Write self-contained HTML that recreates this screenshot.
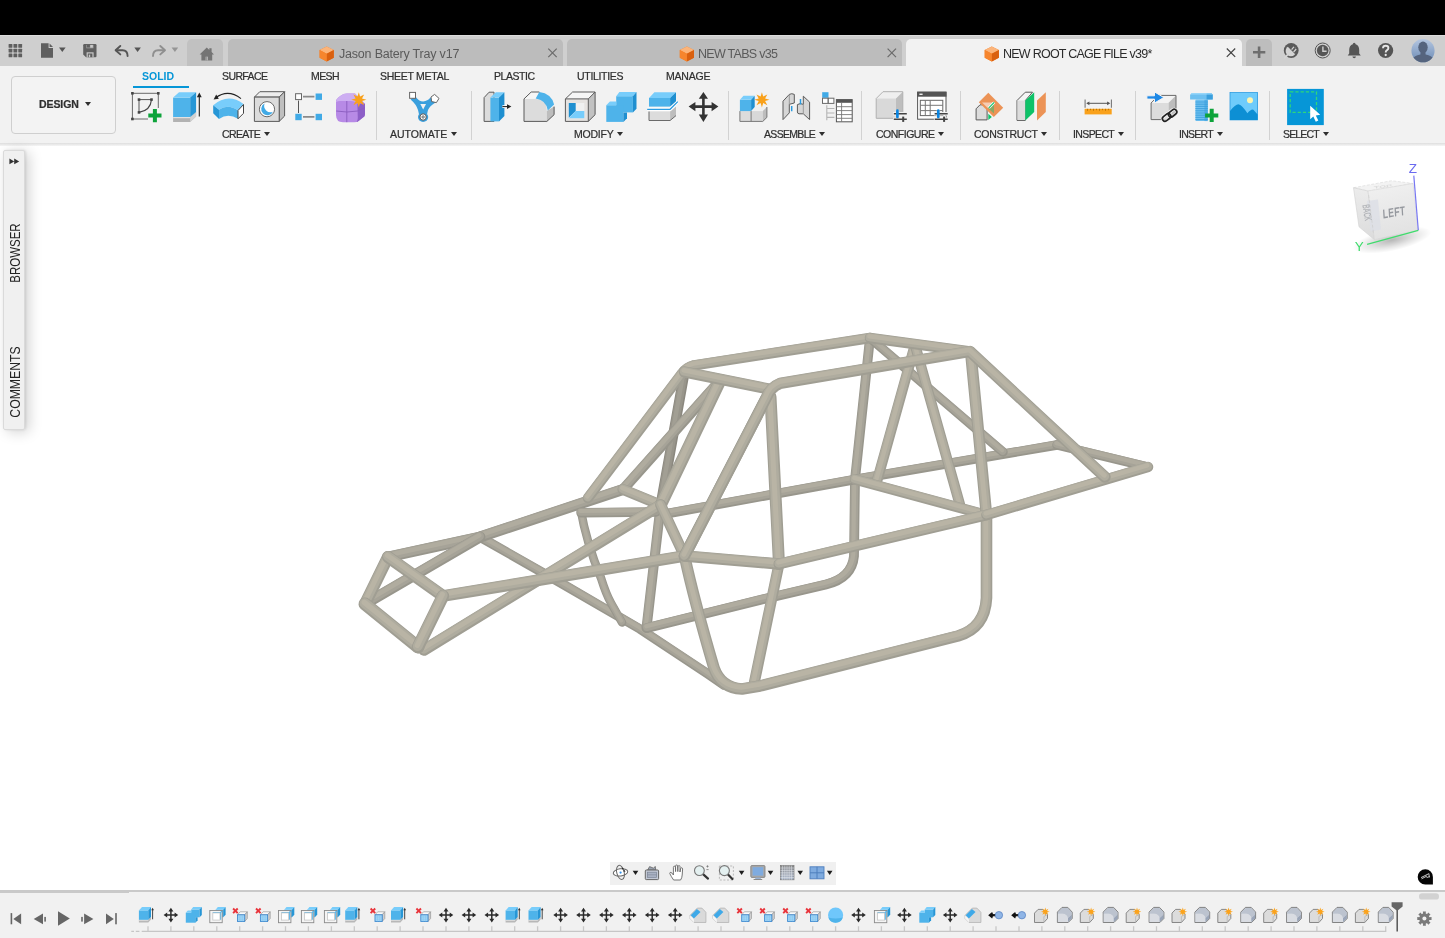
<!DOCTYPE html>
<html lang="en">
<head>
<meta charset="utf-8">
<title>Fusion 360 - NEW ROOT CAGE FILE v39*</title>
<style>
*{box-sizing:border-box;margin:0;padding:0}
html,body{width:1445px;height:938px;overflow:hidden;background:#fff}
body{font-family:"Liberation Sans",sans-serif;color:#3c3c3c;position:relative}
.abs{position:absolute}
#blackbar{left:0;top:0;width:1445px;height:35px;background:#000}
#titlebar{left:0;top:35px;width:1445px;height:31px;background:#cfcfcf;border-top:1px solid #dcdcdc}
.tab{position:absolute;top:3px;height:28px;background:#bcbcbc;border-radius:5px 5px 0 0;font-size:12.5px;color:#5a5a5a;line-height:27px;white-space:nowrap}
.tab.active{background:#f2f2f2;color:#2b2b2b}
.tab .lbl{position:absolute;top:2px}
.tab .x{position:absolute;top:0;font-size:15px;color:#666}
#toolbar{left:0;top:66px;width:1445px;height:78px;background:#f2f2f2}
#tbline{left:0;top:143px;width:1445px;height:3px;background:linear-gradient(#dedede,#ececec 60%,#f6f6f6)}
.ttab{position:absolute;top:4px;font-size:10.5px;color:#2f2f2f;line-height:13px;white-space:nowrap;}
.ttab.sel{color:#0696d7;font-weight:bold}
.glbl{position:absolute;top:61.5px;font-size:10.5px;color:#2f2f2f;line-height:13px;white-space:nowrap}
.glbl i{display:inline-block;width:0;height:0;border-left:3px solid transparent;border-right:3px solid transparent;border-top:4px solid #2f2f2f;margin-left:3.8px;vertical-align:2px}
.sep{position:absolute;top:25px;width:1px;height:49px;background:#d2d2d2}
.ttab,.glbl,.tab .lbl{will-change:transform}
.ttab:not(.sel),.glbl{-webkit-text-stroke:0.22px #2f2f2f}
.ico{position:absolute;overflow:visible}
#timeline{left:0;top:889.8px;width:1445px;height:48.2px;background:#f1f1f1;border-top:2.2px solid #c9c9c9}
</style>
</head>
<body>
<div id="blackbar" class="abs"></div>
<div id="titlebar" class="abs">
  <div class="tab" style="left:187px;width:36px;background:#c1c1c1"></div>
  <div class="tab" style="left:228px;width:335px"><span class="lbl" style="left:111px;letter-spacing:-0.2px">Jason Batery Tray v17</span></div>
  <div class="tab" style="left:567px;width:335px"><span class="lbl" style="left:131px;letter-spacing:-0.71px">NEW TABS v35</span></div>
  <div class="tab active" style="left:906px;width:336px"><span class="lbl" style="left:97px;letter-spacing:-0.75px">NEW ROOT CAGE FILE v39*</span></div>
  <div class="tab" style="left:1246px;width:26px;background:#bdbdbd"></div>
</div>
<svg class="abs" style="left:0;top:35px" width="1445" height="31" viewBox="0 35 1445 31">
  <defs>
    <g id="ocube">
      <path d="M0 3.6 L7.1 0 L14.2 3.6 L14.2 11.2 L7.1 15 L0 11.2Z" fill="#f47b20"/>
      <path d="M0 3.6 L7.1 0 L14.2 3.6 L7.1 7.3Z" fill="#fbb47a"/>
      <path d="M7.1 7.3 L14.2 3.6 L14.2 11.2 L7.1 15Z" fill="#d9600f"/>
      <path d="M0 3.6 L7.1 7.3 L7.1 15 L0 11.2Z" fill="#f6852d"/>
    </g>
    <g id="xclose"><path d="M0 0 L8.4 8.4 M8.4 0 L0 8.4" stroke-width="1.2" fill="none"/></g>
    <path id="dd" d="M0 0 L6.6 0 L3.3 4.4Z"/>
    <linearGradient id="avg" x1="0" y1="0" x2="0" y2="1"><stop offset="0" stop-color="#b4c6e0"/><stop offset="1" stop-color="#6c8bb5"/></linearGradient>
    <clipPath id="avc"><circle cx="1423" cy="50.7" r="11.6"/></clipPath>
  </defs>
  <!-- grid -->
  <g fill="#5f5f5f"><rect x="8.60" y="44.00" width="3.8" height="3.7" rx=".5"/><rect x="13.45" y="44.00" width="3.8" height="3.7" rx=".5"/><rect x="18.30" y="44.00" width="3.8" height="3.7" rx=".5"/><rect x="8.60" y="48.75" width="3.8" height="3.7" rx=".5"/><rect x="13.45" y="48.75" width="3.8" height="3.7" rx=".5"/><rect x="18.30" y="48.75" width="3.8" height="3.7" rx=".5"/><rect x="8.60" y="53.50" width="3.8" height="3.7" rx=".5"/><rect x="13.45" y="53.50" width="3.8" height="3.7" rx=".5"/><rect x="18.30" y="53.50" width="3.8" height="3.7" rx=".5"/></g>
  <!-- file -->
  <path d="M41 43.2 L48.6 43.2 L48.6 48 L53 48 L53 57.8 L41 57.8Z M49.6 43.4 L53 46.9 L49.6 46.9Z" fill="#5f5f5f"/>
  <use href="#dd" x="59" y="47.6" fill="#555"/>
  <!-- save -->
  <path d="M84.4 44 H95.4 Q96.5 44 96.5 45.2 V56 Q96.5 57.2 95.4 57.2 H86 L83.2 54.6 V45.2 Q83.2 44 84.4 44Z" fill="#5f5f5f"/>
  <rect x="86.3" y="44.9" width="7.2" height="3.4" fill="#9c9c9c"/><rect x="86.9" y="44.9" width="3" height="2.6" fill="#5f5f5f"/><rect x="90.4" y="44.9" width="2.4" height="2.6" fill="#c9c9c9"/>
  <rect x="86.6" y="52.3" width="7" height="4.9" fill="#c9c9c9"/><rect x="87.8" y="53.5" width="4.6" height="3.7" fill="#5f5f5f"/><rect x="88.8" y="54.6" width="1.4" height="2.6" fill="#c9c9c9"/>
  <!-- undo -->
  <path d="M120.3 46 L115.6 50.2 L120.3 54.4" fill="none" stroke="#555" stroke-width="1.9" stroke-linejoin="round" stroke-linecap="round"/>
  <path d="M116.4 50.2 L122.5 50.2 Q127.6 50.4 127.6 56" fill="none" stroke="#555" stroke-width="1.9" stroke-linecap="round"/>
  <use href="#dd" x="134.3" y="47.6" fill="#555"/>
  <!-- redo -->
  <path d="M160.3 46 L165 50.2 L160.3 54.4" fill="none" stroke="#8f8f8f" stroke-width="1.9" stroke-linejoin="round" stroke-linecap="round"/>
  <path d="M164.2 50.2 L158.1 50.2 Q153 50.4 153 56" fill="none" stroke="#8f8f8f" stroke-width="1.9" stroke-linecap="round"/>
  <use href="#dd" x="171.6" y="47.6" fill="#959595"/>
  <!-- home -->
  <g transform="translate(0 1.3)"><path d="M199.6 53.2 L206.8 46.2 L209.3 48.6 L209.3 47 L211.6 47 L211.6 50.8 L214 53.2 L212.2 53.2 L212.2 59.2 L201.4 59.2 L201.4 53.2Z" fill="#747474"/>
  <path d="M205.6 59.2 V55.4 H208 V59.2Z" fill="#c1c1c1"/><path d="M206.8 55.4 V59.2" stroke="#747474" stroke-width=".7"/></g>
  <!-- tab icons -->
  <use href="#ocube" x="319.6" y="46.5"/>
  <use href="#xclose" x="548.3" y="48.7" stroke="#6a6a6a"/>
  <use href="#ocube" x="679.8" y="46.5"/>
  <use href="#xclose" x="887.6" y="48.7" stroke="#6a6a6a"/>
  <use href="#ocube" x="984.7" y="46.5"/>
  <use href="#xclose" x="1226.8" y="48.5" stroke="#444"/>
  <!-- plus -->
  <path d="M1259.1 46.4 L1259.1 58 M1253 52.2 L1265.3 52.2" stroke="#6e6e6e" stroke-width="2.6" fill="none"/>
  <!-- extension / job status -->
  <circle cx="1291.2" cy="50.5" r="7.4" fill="#5a5a5a"/>
  <circle cx="1290.9" cy="50.9" r="5.3" fill="#d4d4d4"/>
  <path d="M1284.2 58.4 L1288.6 53.6" stroke="#d4d4d4" stroke-width="1.7"/>
  <path d="M1287.6 46.6 L1291 43.6 L1298.2 50.8 L1295.2 54.2Z" fill="#5a5a5a"/>
  <path d="M1291.6 49.6 L1293.9 46.8 M1293.6 52 L1296.2 49" stroke="#d4d4d4" stroke-width="1.2"/>
  <!-- clock -->
  <circle cx="1322.7" cy="50.5" r="7.5" fill="none" stroke="#555" stroke-width="1"/>
  <circle cx="1322.7" cy="50.5" r="5.8" fill="#555"/>
  <path d="M1322.9 46.6 L1322.9 51.2 L1326.6 51.2" stroke="#cfcfcf" stroke-width="1.4" fill="none"/>
  <!-- bell -->
  <path d="M1354.2 42.8 Q1355.5 42.8 1355.6 44.3 Q1359.2 45.6 1359.2 50 L1359.2 53.4 L1360.8 55.6 L1347.7 55.6 L1349.2 53.4 L1349.2 50 Q1349.2 45.6 1352.8 44.3 Q1352.9 42.8 1354.2 42.8Z" fill="#555"/>
  <path d="M1352.4 56.6 L1356 56.6 Q1355.6 58.2 1354.2 58.2 Q1352.8 58.2 1352.4 56.6Z" fill="#555"/>
  <!-- help -->
  <circle cx="1385.6" cy="50.5" r="7.6" fill="#555"/>
  <path d="M1383 48.2 Q1383 45.8 1385.7 45.8 Q1388.4 45.8 1388.4 48 Q1388.4 49.4 1386.8 50.3 Q1385.7 51 1385.7 52.4" fill="none" stroke="#e6e6e6" stroke-width="1.9"/>
  <circle cx="1385.7" cy="55" r="1.15" fill="#e6e6e6"/>
  <!-- avatar -->
  <circle cx="1423" cy="50.7" r="11.6" fill="url(#avg)"/>
  <g clip-path="url(#avc)" fill="#55647e">
    <ellipse cx="1423" cy="47.3" rx="4.7" ry="5.9"/>
    <path d="M1420.6 51 L1425.4 51 L1425.6 54.6 Q1432 56 1433.4 59 L1434 64 L1412 64 L1412.6 59 Q1414 56 1420.4 54.6Z"/>
  </g>
</svg>
<div id="toolbar" class="abs">
  <div class="ttab sel" style="left:142px">SOLID</div>
  <div class="ttab" style="left:222px;letter-spacing:-0.6px">SURFACE</div>
  <div class="ttab" style="left:311px;letter-spacing:-0.61px">MESH</div>
  <div class="ttab" style="left:380px;letter-spacing:-0.27px">SHEET METAL</div>
  <div class="ttab" style="left:494px;letter-spacing:-0.45px">PLASTIC</div>
  <div class="ttab" style="left:577px;letter-spacing:-0.31px">UTILITIES</div>
  <div class="ttab" style="left:666px;letter-spacing:-0.19px">MANAGE</div>
  <div class="abs" style="left:132.5px;top:19.6px;width:56.5px;height:2.7px;background:#0696d7"></div>
  <div class="abs" id="designbtn" style="left:11px;top:10px;width:105px;height:58px;border:1px solid #cfcfcf;border-radius:4px;background:#f3f3f3"></div>
  <div class="glbl" style="left:39.2px;top:31.5px;font-weight:bold;letter-spacing:-0.08px">DESIGN<i style="margin-left:6px"></i></div>
  <div class="glbl" style="left:222px;letter-spacing:-0.6px">CREATE<i></i></div>
  <div class="glbl" style="left:390px">AUTOMATE<i></i></div>
  <div class="glbl" style="left:574px;letter-spacing:-0.24px">MODIFY<i></i></div>
  <div class="glbl" style="left:764px;letter-spacing:-0.68px">ASSEMBLE<i></i></div>
  <div class="glbl" style="left:876px;letter-spacing:-0.5px">CONFIGURE<i></i></div>
  <div class="glbl" style="left:974px;letter-spacing:-0.25px">CONSTRUCT<i></i></div>
  <div class="glbl" style="left:1073px;letter-spacing:-0.62px">INSPECT<i></i></div>
  <div class="glbl" style="left:1179px;letter-spacing:-0.75px">INSERT<i></i></div>
  <div class="glbl" style="left:1283px;letter-spacing:-0.83px">SELECT<i></i></div>
  <div class="sep" style="left:376px"></div>
  <div class="sep" style="left:471px"></div>
  <div class="sep" style="left:728px"></div>
  <div class="sep" style="left:861px"></div>
  <div class="sep" style="left:960px"></div>
  <div class="sep" style="left:1059px"></div>
  <div class="sep" style="left:1135px"></div>
  <div class="sep" style="left:1269px"></div>
</div>
<div id="tbline" class="abs"></div>
<svg class="abs" style="left:0;top:66px" width="1445" height="78" viewBox="0 66 1445 78">
<defs>
  <path id="star8" d="M0 -7.6 L1.3 -3.2 L5.4 -5.4 L3.2 -1.3 L7.6 0 L3.2 1.3 L5.4 5.4 L1.3 3.2 L0 7.6 L-1.3 3.2 L-5.4 5.4 L-3.2 1.3 L-7.6 0 L-3.2 -1.3 L-5.4 -5.4 L-1.3 -3.2Z" fill="#f9a11b"/>
  <g id="gplus"><path d="M-2 -6.6 H2 V-2 H6.6 V2 H2 V6.6 H-2 V2 H-6.6 V-2 H-2Z" fill="#0da33a"/></g>
</defs>
<!-- ============ CREATE ============ -->
<!-- sketch -->
<g>
  <path d="M132.4 93.3 H158.3 V108 M132.4 93.3 V119 H148" fill="none" stroke="#6a6a6a" stroke-width="1"/>
  <path d="M139 99.6 H151.5 M139 99.6 V112.4" fill="none" stroke="#555" stroke-width="1"/>
  <path d="M151.5 99.6 Q150.5 110.5 139 112.4" fill="none" stroke="#444" stroke-width="1.1"/>
  <g fill="#444"><rect x="131.1" y="92" width="2.6" height="2.6"/><rect x="157" y="92" width="2.6" height="2.6"/><rect x="131.1" y="117.7" width="2.6" height="2.6"/>
  <rect x="137.7" y="98.3" width="2.6" height="2.6"/><rect x="150.2" y="98.3" width="2.6" height="2.6"/><rect x="137.7" y="111.1" width="2.6" height="2.6"/></g>
  <use href="#gplus" x="154.9" y="115.6"/>
</g>
<!-- extrude -->
<g>
  <path d="M173.1 117 H190.2 L196.1 112 V116.6 L190.2 121.9 H173.1Z" fill="#b2b2b2"/>
  <path d="M190.2 117 L196.1 112 V116.6 L190.2 121.9Z" fill="#d2d2d2"/>
  <rect x="173.1" y="117" width="17.1" height="1.2" fill="#e2e2e2"/>
  <rect x="173.1" y="97.6" width="17.1" height="19.4" fill="#4eb3ea"/>
  <path d="M173.1 97.6 L179 92.2 H196.1 L190.2 97.6Z" fill="#78cdfb"/>
  <path d="M190.2 97.6 L196.1 92.2 V112 L190.2 117Z" fill="#2696d6"/>
  <path d="M199.3 95 V116.6" stroke="#222" stroke-width="1.1"/>
  <path d="M199.3 92.6 L201.7 97.2 H196.9Z" fill="#222"/>
</g>
<!-- revolve -->
<g>
  <path d="M241 98.6 Q228 88.6 215.6 97.8" fill="none" stroke="#222" stroke-width="1.1"/>
  <path d="M213.6 99.4 L216.2 94.6 L218.8 98.8Z" fill="#222"/>
  <path d="M213.2 105.2 Q228 92.6 243.5 103.9 L238 110.5 Q228 103.6 219 109.7Z" fill="#78cdfb"/>
  <path d="M213.2 105.2 L219 109.7 V119 L213.2 113.3Z" fill="#2696d6"/>
  <path d="M219 109.7 Q228 103.6 238 110.5 V118.8 Q228 112.6 219 119Z" fill="#4eb3ea"/>
  <path d="M238 110.5 L243.5 104.5 V113.3 L238 118.8Z" fill="#fff" stroke="#444" stroke-width="1"/>
</g>
<!-- hole -->
<g stroke="#5a5a5a" stroke-width="1" stroke-linejoin="round">
  <path d="M254.4 97.1 L259.8 91.7 H284.6 L279.2 97.1Z" fill="#ededed"/>
  <path d="M279.2 97.1 L284.6 91.7 V116 L279.2 121.4Z" fill="#bfbfbf"/>
  <rect x="254.4" y="97.1" width="24.8" height="24.3" fill="#dcdcdc"/>
  <circle cx="267" cy="109.2" r="7.6" fill="#fff" stroke="#6a6a6a"/>
</g>
<path d="M264.6 103.6 A6.2 6.2 0 1 0 273 111.8 A6.4 6.4 0 0 1 264.6 103.6Z" fill="#41aae6"/>
<!-- pattern -->
<g>
  <path d="M303 96.7 H314.4 M303 116.9 H314.4" stroke="#8a8a8a" stroke-width="1.8"/>
  <path d="M298.5 100.6 V113" stroke="#555" stroke-width="1"/>
  <rect x="295.6" y="93.7" width="5.9" height="5.9" fill="#fff" stroke="#666" stroke-width="1"/>
  <rect x="315.6" y="93.5" width="6.4" height="6.4" fill="#41aae6"/>
  <rect x="295.3" y="113.8" width="6.4" height="6.4" fill="#41aae6"/>
  <rect x="315.6" y="113.8" width="6.4" height="6.4" fill="#41aae6"/>
</g>
<!-- form -->
<g>
  <path d="M341 95.4 Q343.4 93.4 347 93.5 H355 L365 103.8 V114.2 Q365 116.4 363 117.6 L358.6 121 Q356.6 122.4 354 122.3 H343 Q336.2 122.2 336 115.2 V102.4 Q336 99.2 338.2 97.6Z" fill="#b78ae6"/>
  <path d="M341 95.4 Q343.4 93.4 347 93.5 H355 L361.6 100 L357.4 103.4 Q355 101 351 101 H340 Q337.4 101 336.2 102.2 Q336 99.2 338.2 97.6Z" fill="#cdaef2"/>
  <path d="M357.4 103.4 L365 103.8 V114.2 Q365 116.4 363 117.6 L358.6 121 Q357.6 121.8 356.6 122 Q357.8 120.4 357.8 118Z" fill="#8d5fc7"/>
  <path d="M336.2 111 Q347 113 357.6 111 M346.8 101 V122.2 M357.6 111 L364.8 107.6" fill="none" stroke="#8a5cc0" stroke-width="0.9"/>
  <use href="#star8" x="358.8" y="99.8"/>
</g>
<!-- ============ AUTOMATE ============ -->
<g>
  <path d="M410.6 99.6 Q413.6 96.4 416 97.2 Q419 101.4 423.2 101.4 Q427.6 101.4 430.4 97.6 L435.6 102.4 Q429.8 105.6 428 110 L426.9 114.7 H419.1 L418 110 Q416.2 104.4 410.6 99.6Z" fill="#3a9fdd"/>
  <circle cx="423.1" cy="117" r="5.1" fill="#3a9fdd"/>
  <path d="M420.3 104 H426 L423.2 109.4Z" fill="#f2f2f2"/>
  <rect x="409.6" y="92.4" width="5.9" height="5.9" fill="#fff" stroke="#666" stroke-width="1"/>
  <path d="M434.6 94.4 L439 98.4 L436.4 102.6 L431.6 101.6 L431 97Z" fill="#fff" stroke="#666" stroke-width="1"/>
  <circle cx="423.1" cy="117" r="3.2" fill="#fff" stroke="#555" stroke-width="1"/>
  <circle cx="423.1" cy="117" r="1.2" fill="#ddd" stroke="#555" stroke-width=".8"/>
</g>
<!-- ============ MODIFY ============ -->
<!-- press pull -->
<g>
  <path d="M484.1 121.4 V97.6 L489.1 92.2 H494 V121.4Z" fill="#dcdcdc" stroke="#5a5a5a" stroke-width="1"/>
  <rect x="490.4" y="97.6" width="8.6" height="23.8" fill="#4eb3ea"/>
  <path d="M490.4 97.6 L495.8 92.2 H504.4 L499 97.6Z" fill="#78cdfb"/>
  <path d="M499 97.6 L504.4 92.2 V116 L499 121.4Z" fill="#1f8fd0"/>
  <path d="M502.4 106.6 H508.4" stroke="#fff" stroke-width="2.8"/>
  <path d="M502.4 106.6 H508.4" stroke="#222" stroke-width="1.1"/>
  <path d="M511.4 106.6 L507 104.2 V109Z" fill="#222"/>
</g>
<!-- fillet -->
<g>
  <path d="M524 98.9 L531.2 92 H539.3 L535.7 98.4Z" fill="#f6f6f6"/>
  <path d="M524 98.9 H536.6 Q547 100 546.9 111.1 V121.4 H524Z" fill="#dcdcdc"/>
  <path d="M546.9 111.1 L554.1 106.6 V114.7 L546.9 121.4Z" fill="#bdbdbd"/>
  <path d="M539.3 92 Q551.4 93.6 554.1 104.4 L547.8 110.6 Q546.6 100.2 535.7 98.4Z" fill="#4eb3ea"/>
  <path d="M539.3 92 H531.2 L524 98.9 V121.4 H546.9 L554.1 114.7 V106.6" fill="none" stroke="#5a5a5a" stroke-width="1" stroke-linejoin="round"/>
</g>
<!-- shell -->
<g stroke-linejoin="round">
  <path d="M565.4 98.9 L572.6 92 H595.1 L588.3 98.9Z" fill="#f6f6f6"/>
  <path d="M588.3 98.9 L595.1 92 V114.7 L588.3 121.4Z" fill="#c2c2c2"/>
  <rect x="565.4" y="98.9" width="22.9" height="22.5" fill="#e6e3e1"/>
  <rect x="568.8" y="103" width="15.5" height="15.3" fill="#f0f0f0"/>
  <path d="M568.8 103 H575.7 V111 L568.8 117.8Z" fill="#1f8fd0"/>
  <path d="M568.8 118.3 L575.7 111 H584.3 V118.3Z" fill="#78cdfb"/>
  <path d="M565.4 98.9 L572.6 92 H595.1 V114.7 L588.3 121.4 H565.4Z M565.4 98.9 H588.3 V121.4 M588.3 98.9 L595.1 92" fill="none" stroke="#5a5a5a" stroke-width="1"/>
</g>
<!-- combine -->
<g>
  <rect x="616.2" y="96.2" width="16.7" height="16.2" fill="#4eb3ea"/>
  <path d="M616.2 96.2 L619.4 92 H636.5 L632.9 96.2Z" fill="#78cdfb"/>
  <path d="M632.9 96.2 L636.5 92 V108.8 L632.9 112.4Z" fill="#1f8fd0"/>
  <rect x="606.3" y="105.2" width="17.1" height="16.7" fill="#4eb3ea"/>
  <path d="M606.3 105.2 L609.9 101.6 H616.2 V105.2Z" fill="#78cdfb"/>
  <path d="M623.4 112.4 H627 V118.3 L623.4 121.9Z" fill="#1f8fd0"/>
</g>
<!-- split -->
<g>
  <rect x="649" y="111.5" width="21.1" height="9" fill="#dcdcdc"/>
  <path d="M670.1 111.5 L676 106.6 V115.6 L670.1 120.5Z" fill="#bdbdbd"/>
  <path d="M649 111.5 V120.5 H670.1 L676 115.6" fill="none" stroke="#6a6a6a" stroke-width="1"/>
  <path d="M647.2 109.3 H670.1 L677.8 101.6" fill="none" stroke="#fff" stroke-width="3.4"/>
  <rect x="649" y="98" width="21.1" height="8.6" fill="#4eb3ea"/>
  <path d="M649 98 L654.4 92.2 H676 L670.1 98Z" fill="#78cdfb"/>
  <path d="M670.1 98 L676 92.2 V101.2 L670.1 106.6Z" fill="#1f8fd0"/>
  <path d="M647.2 109.3 H670.1 L677.8 101.6" fill="none" stroke="#2b9be0" stroke-width="1.3"/>
</g>
<!-- move -->
<g fill="#333">
  <path d="M703.4 92 L708 98.8 H704.7 V105.3 H711.6 V102 L718.4 106.6 L711.6 111.2 V107.9 H704.7 V114.6 H708 L703.4 121.9 L698.8 114.6 H702.1 V107.9 H695.4 V111.2 L688.6 106.6 L695.4 102 V105.3 H702.1 V98.8 H698.8Z"/>
</g>
<!-- ============ ASSEMBLE ============ -->
<!-- new component -->
<g>
  <rect x="739.9" y="111.1" width="11.2" height="10.3" fill="#dcdcdc"/>
  <rect x="751.1" y="111.1" width="11.7" height="10.3" fill="#d8d8d8"/>
  <path d="M751.1 111.1 L754.7 107 H766.9 L762.8 111.1Z" fill="#f0f0f0"/>
  <path d="M762.8 111.1 L766.9 107 V117.4 L762.8 121.4Z" fill="#bdbdbd"/>
  <path d="M739.9 111.1 V121.4 H762.8 L766.9 117.4 V107 M751.1 111.1 V121.4" fill="none" stroke="#777" stroke-width="1"/>
  <rect x="739.9" y="99.8" width="11.2" height="11.3" fill="#4eb3ea"/>
  <path d="M739.9 99.8 L743.5 95.8 H754.7 L751.1 99.8Z" fill="#78cdfb"/>
  <path d="M751.1 99.8 L754.7 95.8 V107 L751.1 111.1Z" fill="#1f8fd0"/>
  <use href="#star8" x="761.9" y="99.8"/>
</g>
<!-- joint -->
<g stroke="#5a5a5a" stroke-width="1" stroke-linejoin="round">
  <path d="M783 101.2 L789.3 94.4 Q791.8 93 794.3 94.4 V103 L789.3 104.3 V112.9 L783 119.6Z" fill="#d6d6d6"/>
  <path d="M789.3 95 V104.3" fill="none" stroke="#999"/>
  <path d="M803.3 96.2 L809.6 102.1 V119.6 L803.3 113.8 H799 Q797.4 113.6 797.4 112 V104.6 Q800.4 102.6 803.3 104.4Z" fill="#d6d6d6"/>
  <path d="M803.3 104.4 V113.8" fill="none" stroke="#999"/>
</g>
<path d="M800.5 98.9 V104.4 M791.7 106.1 V111.2" stroke="#2b9be0" stroke-width="1.5"/>
<!-- table -->
<g>
  <rect x="822.2" y="92.2" width="6.3" height="5.6" fill="#41aae6"/>
  <rect x="822.5" y="98.2" width="5.6" height="5.2" fill="#fff" stroke="#6a6a6a" stroke-width="1"/>
  <rect x="828.3" y="98.2" width="5.6" height="5.2" fill="#fff" stroke="#6a6a6a" stroke-width="1"/>
  <path d="M826.8 105.2 V120.2 M826.8 108.5 H834.4 M826.8 113 H834.4 M826.8 117.4 H834.4" stroke="#b4b4b4" stroke-width="1.1" fill="none"/>
  <rect x="836.4" y="99.6" width="15.8" height="22.2" fill="#fff" stroke="#555" stroke-width="1"/>
  <rect x="836.4" y="99.6" width="15.8" height="3.2" fill="#555"/>
  <path d="M841.6 102.8 V121.8 M836.4 106.7 H852.2 M836.4 110.6 H852.2 M836.4 114.6 H852.2 M836.4 118.3 H852.2" stroke="#777" stroke-width=".9" fill="none"/>
</g>
<!-- ============ CONFIGURE ============ -->
<g id="cfgcube">
  <path d="M876.2 98.5 L883 91.7 H902.8 L896 98.5Z" fill="#efefef"/>
  <path d="M896 98.5 L902.8 91.7 V111.5 L896 118.3Z" fill="#bebebe"/>
  <rect x="876.2" y="98.5" width="19.8" height="19.8" fill="#d9d9d9"/>
  <path d="M876.2 98.5 L883 91.7 H902.8 V111.5 L896 118.3 H876.2Z" fill="none" stroke="#b0b0b0" stroke-width="1" stroke-linejoin="round"/>
</g>
<g id="sliders">
  <path d="M893 113.8 H907.6 M893 119.3 H907.6 M897.4 110.4 V117.2 M903.2 115.9 V122.6" stroke="#f2f2f2" stroke-width="3.6" fill="none"/>
  <path d="M893.8 113.8 H906.8 M893.8 119.3 H906.8" stroke="#444" stroke-width="1.5" fill="none"/>
  <path d="M897.4 110.7 V116.9" stroke="#0a84e0" stroke-width="2.7" stroke-linecap="round"/>
  <path d="M903.2 116.6 V121.9" stroke="#444" stroke-width="2"/>
</g>
<g>
  <rect x="917.6" y="92.2" width="28.4" height="27" fill="#fff" stroke="#555" stroke-width="1"/>
  <rect x="917.1" y="91.7" width="29.4" height="5" fill="#555"/>
  <rect x="919.4" y="93.6" width="3.2" height="1.3" fill="#fff"/>
  <rect x="920.3" y="100.3" width="22.5" height="15.3" fill="#fff" stroke="#666" stroke-width="1"/>
  <path d="M925.3 100.3 V115.6 M930.2 100.3 V115.6 M920.3 105.3 H942.8 M920.3 110.6 H942.8" stroke="#777" stroke-width="1" fill="none"/>
  <use href="#sliders" x="40.9" y="0"/>
</g>
<!-- ============ CONSTRUCT ============ -->
<g>
  <path d="M976.1 119.9 V108.8 L980 104.8 H987.1 V119.9Z" fill="#dcdcdc" stroke="#5a5a5a" stroke-width="1"/>
  <path d="M988.3 113.8 L991.8 117.1 L988.3 119.9Z" fill="#0dc268"/>
  <path d="M988.3 92.8 L1003.2 107.7 L993.8 117.1 L978.8 102.2Z" fill="#ec9356"/>
  <path d="M982 102.6 H994 L988.2 108.6Z" fill="#f6cdb4"/>
  <path d="M994 102.6 V113.4 L988.2 108.6Z" fill="#8aa865"/>
  <path d="M988.8 107.9 L994.2 102.3" stroke="#fff" stroke-width="2.6"/>
  <path d="M988.8 107.9 L994.2 102.3" stroke="#0dc268" stroke-width="1.1"/>
</g>
<g>
  <path d="M1017 120.4 V100.5 L1025.3 92.2 H1032.5 L1025.3 100.5 V120.4Z" fill="#f4f4f4" stroke="#5a5a5a" stroke-width="1" stroke-linejoin="round"/>
  <rect x="1017.5" y="100.5" width="7.8" height="19.4" fill="#dcdcdc"/>
  <path d="M1025.3 100.5 L1034.2 92.2 V112.1 L1025.3 120.4Z" fill="#0dc268"/>
  <path d="M1037 100.5 L1045.8 92.2 V112.1 L1037 120.4Z" fill="#ec9356"/>
</g>
<!-- ============ INSPECT ============ -->
<g>
  <rect x="1084.6" y="108.8" width="27.1" height="5.6" fill="#f9a11b"/>
  <path d="M1087.5 108.8 v2 M1090.5 108.8 v1.4 M1093.5 108.8 v2 M1096.5 108.8 v1.4 M1099.5 108.8 v2 M1102.5 108.8 v1.4 M1105.5 108.8 v2 M1108.5 108.8 v1.4" stroke="#b87408" stroke-width=".9"/>
  <path d="M1085.1 99.4 V107.8 M1111.4 99.4 V107.8" stroke="#777" stroke-width="1.1"/>
  <path d="M1087.5 103.3 H1109" stroke="#555" stroke-width="1"/>
  <path d="M1086.2 103.3 L1089.4 101.4 V105.2Z M1110.3 103.3 L1107.1 101.4 V105.2Z" fill="#555"/>
</g>
<!-- ============ INSERT ============ -->
<g>
  <path d="M1151.1 103 L1158.7 95.4 H1176 L1168.4 103Z" fill="#f3f3f3"/>
  <path d="M1168.4 103 L1176 95.4 V112 L1168.4 119.6Z" fill="#bdbdbd"/>
  <rect x="1151.1" y="103" width="17.3" height="16.6" fill="#dcdcdc"/>
  <path d="M1151.1 103 L1158.7 95.4 H1176 V112 L1168.4 119.6 H1151.1Z" fill="none" stroke="#6a6a6a" stroke-width="1" stroke-linejoin="round"/>
  <path d="M1146.9 95.8 H1154.5 V91.9 L1163.8 97.5 L1154.5 103 V99.1 H1146.9Z" fill="#1e88e5" stroke="#f2f2f2" stroke-width="1"/>
  <g fill="none" stroke="#f2f2f2" stroke-width="3.4">
    <rect x="-4.6" y="-2.6" width="9.2" height="5.2" rx="2.6" transform="translate(1166.6 117.4) rotate(-38)"/>
    <rect x="-4.6" y="-2.6" width="9.2" height="5.2" rx="2.6" transform="translate(1172.6 113.2) rotate(-38)"/>
  </g>
  <g fill="none" stroke="#222" stroke-width="1.7">
    <rect x="-4.6" y="-2.6" width="9.2" height="5.2" rx="2.6" transform="translate(1166.6 117.4) rotate(-38)"/>
    <rect x="-4.6" y="-2.6" width="9.2" height="5.2" rx="2.6" transform="translate(1172.6 113.2) rotate(-38)"/>
  </g>
</g>
<g>
  <rect x="1195.4" y="99.5" width="12.4" height="21.6" rx="1" fill="#6ec0f0"/>
  <path d="M1195.4 102 h12.4 M1195.4 104.2 h12.4 M1195.4 106.4 h12.4 M1195.4 108.6 h12.4 M1195.4 110.8 h12.4 M1195.4 113 h12.4 M1195.4 115.2 h12.4 M1195.4 117.4 h12.4 M1195.4 119.6 h12.4" stroke="#3a9fdd" stroke-width=".9"/>
  <rect x="1204.4" y="99.5" width="3.4" height="21.6" fill="#3a9fdd" opacity=".55"/>
  <path d="M1191.6 93.3 H1211.2 L1212.7 94.8 V99.5 H1190.1 V94.8Z" fill="#6ec0f0"/>
  <path d="M1206.6 93.3 H1211.2 L1212.7 94.8 V99.5 H1206.6Z" fill="#3a9fdd"/>
  <path d="M1191.6 93.3 H1211.2 L1212.4 94.6 H1190.4Z" fill="#9ad8fb"/>
  <use href="#gplus" x="1211.7" y="115.4"/>
</g>
<g>
  <rect x="1230" y="92.6" width="27.6" height="27.3" fill="#6ecbfb" stroke="#2b9be0" stroke-width=".8"/>
  <path d="M1230 119.9 V111 Q1236 103.6 1239 104.4 Q1242 105 1247.4 113.2 Q1251.6 108.4 1253.4 109.8 L1257.6 114.4 V119.9Z" fill="#0d8fd4"/>
  <circle cx="1250" cy="100.2" r="3" fill="#fdf5b0"/>
</g>
<!-- ============ SELECT ============ -->
<g>
  <rect x="1287.1" y="88.9" width="36.7" height="36.2" fill="#0696d7"/>
  <rect x="1290.2" y="91.9" width="26.3" height="20.5" fill="none" stroke="#2fd67b" stroke-width="1.3" stroke-dasharray="3.2 2"/>
  <path d="M1310.2 105.8 V119.3 L1313.3 116.6 L1315.8 121.7 L1318.3 120.6 L1315.8 115.4 L1320.2 114.8Z" fill="#fff"/>
</g>
</svg>
<!-- left browser/comments panel -->
<div class="abs" style="left:3px;top:150px;width:22.4px;height:279.6px;background:#f0f0f0;border:1px solid #dadada;border-radius:2px;box-shadow:4px 2px 14px rgba(0,0,0,.18),1px 0 3px rgba(0,0,0,.1)"></div>
<svg class="abs" style="left:0;top:150px" width="40" height="30" viewBox="0 150 40 30"><path d="M9.4 158.6 L14.2 161.4 L9.4 164.2Z M14.2 158.6 L19.2 161.4 L14.2 164.2Z" fill="#333"/></svg>
<div class="abs" style="left:15px;top:253.4px;width:0;height:0"><div style="position:absolute;transform:translate(-50%,-50%) rotate(-90deg) scaleX(.82);font-size:14px;color:#222;white-space:nowrap;line-height:14px">BROWSER</div></div>
<div class="abs" style="left:15px;top:382px;width:0;height:0"><div style="position:absolute;transform:translate(-50%,-50%) rotate(-90deg) scaleX(.874);font-size:14px;color:#222;white-space:nowrap;line-height:14px">COMMENTS</div></div>
<!-- view cube -->
<svg class="abs" style="left:1320px;top:150px;will-change:transform" width="125" height="120" viewBox="1320 150 125 120">
  <defs>
    <radialGradient id="vcsh" cx=".5" cy=".5" r=".5"><stop offset="0" stop-color="#000" stop-opacity=".28"/><stop offset=".6" stop-color="#000" stop-opacity=".1"/><stop offset="1" stop-color="#000" stop-opacity="0"/></radialGradient>
    <linearGradient id="vcl" x1="0" y1="0" x2="0.2" y2="1"><stop offset="0" stop-color="#f1f1f1"/><stop offset="1" stop-color="#e2e2e2"/></linearGradient>
    <linearGradient id="vcb" x1="0" y1="0" x2="0" y2="1"><stop offset="0" stop-color="#ececec"/><stop offset="1" stop-color="#dcdcdc"/></linearGradient>
  </defs>
  <ellipse cx="1392" cy="240" rx="40" ry="11" fill="url(#vcsh)" transform="rotate(-12 1392 240)"/>
  <path d="M1353.5 187.7 L1391.6 180.7 L1413.1 183.5 L1368 191Z" fill="#f3f3f3" stroke="#d9d9d9" stroke-width=".6" stroke-dasharray="3 1.5"/>
  <path d="M1353.5 187.7 L1368 191 L1374.4 239.6 L1359 226.8Z" fill="url(#vcb)" stroke="#d0d0d0" stroke-width=".6"/>
  <path d="M1368 191 L1413.1 183.5 L1417.9 230 L1374.4 239.6Z" fill="url(#vcl)" stroke="#d6d6d6" stroke-width=".6"/>
  <path d="M1367 201 L1378 199.4 L1381 229.6 L1370.6 231.6Z" fill="#dcdfe6" opacity=".8"/>
  <path d="M1368.6 195 L1373.6 234" stroke="#cfcfcf" stroke-width=".7" stroke-dasharray="3 2"/>
  <text transform="translate(1394.2 216.6) rotate(-9.5) skewX(-6) scale(.69 1)" font-family="Liberation Sans, sans-serif" font-weight="bold" font-size="12.6" text-anchor="middle" fill="#95989e" letter-spacing=".3">LEFT</text>
  <text transform="translate(1363.6 213.2) rotate(80) scale(.55 1)" font-family="Liberation Sans, sans-serif" font-weight="bold" font-size="10.5" text-anchor="middle" fill="#b4b6ba">BACK</text>
  <text transform="translate(1383 187.6) rotate(-8) scale(1 .35)" font-family="Liberation Sans, sans-serif" font-weight="bold" font-size="9" text-anchor="middle" fill="#dadada">TOP</text>
  <path d="M1413.8 175.6 L1418.3 230.3" stroke="#7777f2" stroke-width="1.2"/>
  <path d="M1418.3 230.3 L1367.1 244.4" stroke="#3fdc6c" stroke-width="1.3"/>
  <text x="1412.9" y="172.6" font-family="Liberation Sans, sans-serif" font-size="13.5" text-anchor="middle" fill="#6a6af0">Z</text>
  <text x="1359.2" y="250.6" font-family="Liberation Sans, sans-serif" font-size="13.5" text-anchor="middle" fill="#3fdc6c">Y</text>
</svg>
<svg class="abs" style="left:340px;top:310px" width="840" height="400" viewBox="340 310 840 400" fill="none" stroke-linecap="round" stroke-linejoin="round">
<path d="M480.0 537.0 L560.0 582.5 L640.0 629.0 L708.0 674.0 L724.0 685.0" stroke="#98968c" stroke-width="9.5"/><path d="M480.0 537.0 L560.0 582.5 L640.0 629.0 L708.0 674.0 L724.0 685.0" stroke="#a6a398" stroke-width="7.4" transform="translate(-0.3 -0.8)"/><path d="M480.0 537.0 L560.0 582.5 L640.0 629.0 L708.0 674.0 L724.0 685.0" stroke="#b0ac9f" stroke-width="4.0" transform="translate(-0.7 -1.7)"/>
<path d="M580 506 Q586 542 601 578 Q606 594 611 603 L622 622.5" stroke="#98968c" stroke-width="8.5"/><path d="M580 506 Q586 542 601 578 Q606 594 611 603 L622 622.5" stroke="#a6a398" stroke-width="6.6" transform="translate(-0.3 -0.8)"/><path d="M580 506 Q586 542 601 578 Q606 594 611 603 L622 622.5" stroke="#b0ac9f" stroke-width="3.6" transform="translate(-0.7 -1.7)"/>
<path d="M684.5 372.0 L660.7 505.0" stroke="#8b887f" stroke-width="10.3"/><path d="M684.5 372.0 L660.7 505.0" stroke="#98958b" stroke-width="8.0" transform="translate(-0.3 -0.8)"/><path d="M684.5 372.0 L660.7 505.0" stroke="#a29f94" stroke-width="4.3" transform="translate(-0.7 -1.7)"/>
<path d="M660.7 505.0 L646.5 628.0" stroke="#98968c" stroke-width="10.0"/><path d="M660.7 505.0 L646.5 628.0" stroke="#a6a398" stroke-width="7.8" transform="translate(-0.3 -0.8)"/><path d="M660.7 505.0 L646.5 628.0" stroke="#b0ac9f" stroke-width="4.2" transform="translate(-0.7 -1.7)"/>
<path d="M647 628 L760 600 L826 584.5 Q852 578 854 556 L855 479.5 L870 338" stroke="#98968c" stroke-width="9.8"/><path d="M647 628 L760 600 L826 584.5 Q852 578 854 556 L855 479.5 L870 338" stroke="#a6a398" stroke-width="7.6" transform="translate(-0.3 -0.8)"/><path d="M647 628 L760 600 L826 584.5 Q852 578 854 556 L855 479.5 L870 338" stroke="#b0ac9f" stroke-width="4.1" transform="translate(-0.7 -1.7)"/>
<path d="M665.0 514.0 L855.0 479.5 L1057.0 445.0" stroke="#98968c" stroke-width="9.5"/><path d="M665.0 514.0 L855.0 479.5 L1057.0 445.0" stroke="#a6a398" stroke-width="7.4" transform="translate(-0.3 -0.8)"/><path d="M665.0 514.0 L855.0 479.5 L1057.0 445.0" stroke="#b0ac9f" stroke-width="4.0" transform="translate(-0.7 -1.7)"/>
<path d="M1057.0 445.0 L1148.0 467.0" stroke="#98968c" stroke-width="9.5"/><path d="M1057.0 445.0 L1148.0 467.0" stroke="#a6a398" stroke-width="7.4" transform="translate(-0.3 -0.8)"/><path d="M1057.0 445.0 L1148.0 467.0" stroke="#b0ac9f" stroke-width="4.0" transform="translate(-0.7 -1.7)"/>
<path d="M870.0 338.0 L1003.0 452.0" stroke="#98968c" stroke-width="9.5"/><path d="M870.0 338.0 L1003.0 452.0" stroke="#a6a398" stroke-width="7.4" transform="translate(-0.3 -0.8)"/><path d="M870.0 338.0 L1003.0 452.0" stroke="#b0ac9f" stroke-width="4.0" transform="translate(-0.7 -1.7)"/>
<path d="M388.0 557.0 L480.0 537.0 L623.0 489.5" stroke="#98968c" stroke-width="11.0"/><path d="M388.0 557.0 L480.0 537.0 L623.0 489.5" stroke="#a6a398" stroke-width="8.6" transform="translate(-0.3 -0.8)"/><path d="M388.0 557.0 L480.0 537.0 L623.0 489.5" stroke="#b0ac9f" stroke-width="4.6" transform="translate(-0.7 -1.7)"/>
<path d="M365.0 604.0 L480.0 537.0" stroke="#98968c" stroke-width="11.0"/><path d="M365.0 604.0 L480.0 537.0" stroke="#a6a398" stroke-width="8.6" transform="translate(-0.3 -0.8)"/><path d="M365.0 604.0 L480.0 537.0" stroke="#b0ac9f" stroke-width="4.6" transform="translate(-0.7 -1.7)"/>
<path d="M588 498 L682 373.5 Q686 367.5 694 365.3 L870 338" stroke="#a09e93" stroke-width="10.4"/><path d="M588 498 L682 373.5 Q686 367.5 694 365.3 L870 338" stroke="#afac9f" stroke-width="8.1" transform="translate(-0.3 -0.8)"/><path d="M588 498 L682 373.5 Q686 367.5 694 365.3 L870 338" stroke="#b9b4a5" stroke-width="4.4" transform="translate(-0.7 -1.7)"/>
<path d="M623.0 489.5 L720.5 380.0" stroke="#98968c" stroke-width="10.3"/><path d="M623.0 489.5 L720.5 380.0" stroke="#a6a398" stroke-width="8.0" transform="translate(-0.3 -0.8)"/><path d="M623.0 489.5 L720.5 380.0" stroke="#b0ac9f" stroke-width="4.3" transform="translate(-0.7 -1.7)"/>
<path d="M656.0 512.0 L581.0 512.8" stroke="#98968c" stroke-width="9.5"/><path d="M656.0 512.0 L581.0 512.8" stroke="#a6a398" stroke-width="7.4" transform="translate(-0.3 -0.8)"/><path d="M656.0 512.0 L581.0 512.8" stroke="#b0ac9f" stroke-width="4.0" transform="translate(-0.7 -1.7)"/>
<path d="M623.0 489.5 L660.7 505.0" stroke="#a09e93" stroke-width="11.0"/><path d="M623.0 489.5 L660.7 505.0" stroke="#afac9f" stroke-width="8.6" transform="translate(-0.3 -0.8)"/><path d="M623.0 489.5 L660.7 505.0" stroke="#b9b4a5" stroke-width="4.6" transform="translate(-0.7 -1.7)"/>
<path d="M720.5 380.0 L660.7 505.0" stroke="#a09e93" stroke-width="12.2"/><path d="M720.5 380.0 L660.7 505.0" stroke="#afac9f" stroke-width="9.5" transform="translate(-0.3 -0.8)"/><path d="M720.5 380.0 L660.7 505.0" stroke="#b9b4a5" stroke-width="5.1" transform="translate(-0.7 -1.7)"/>
<path d="M915.0 345.0 L877.0 481.0" stroke="#a09e93" stroke-width="10.5"/><path d="M915.0 345.0 L877.0 481.0" stroke="#afac9f" stroke-width="8.2" transform="translate(-0.3 -0.8)"/><path d="M915.0 345.0 L877.0 481.0" stroke="#b9b4a5" stroke-width="4.4" transform="translate(-0.7 -1.7)"/>
<path d="M915.0 345.0 L960.0 505.0" stroke="#a09e93" stroke-width="10.5"/><path d="M915.0 345.0 L960.0 505.0" stroke="#afac9f" stroke-width="8.2" transform="translate(-0.3 -0.8)"/><path d="M915.0 345.0 L960.0 505.0" stroke="#b9b4a5" stroke-width="4.4" transform="translate(-0.7 -1.7)"/>
<path d="M855.0 479.5 L986.5 515.0" stroke="#a09e93" stroke-width="10.5"/><path d="M855.0 479.5 L986.5 515.0" stroke="#afac9f" stroke-width="8.2" transform="translate(-0.3 -0.8)"/><path d="M855.0 479.5 L986.5 515.0" stroke="#b9b4a5" stroke-width="4.4" transform="translate(-0.7 -1.7)"/>
<path d="M870.0 338.0 L970.0 351.5" stroke="#a09e93" stroke-width="10.5"/><path d="M870.0 338.0 L970.0 351.5" stroke="#afac9f" stroke-width="8.2" transform="translate(-0.3 -0.8)"/><path d="M870.0 338.0 L970.0 351.5" stroke="#b9b4a5" stroke-width="4.4" transform="translate(-0.7 -1.7)"/>
<path d="M684.5 372.0 L767.7 388.8" stroke="#a09e93" stroke-width="11.3"/><path d="M684.5 372.0 L767.7 388.8" stroke="#afac9f" stroke-width="8.8" transform="translate(-0.3 -0.8)"/><path d="M684.5 372.0 L767.7 388.8" stroke="#b9b4a5" stroke-width="4.7" transform="translate(-0.7 -1.7)"/>
<path d="M424.0 650.0 L660.7 505.0" stroke="#a09e93" stroke-width="11.5"/><path d="M424.0 650.0 L660.7 505.0" stroke="#afac9f" stroke-width="9.0" transform="translate(-0.3 -0.8)"/><path d="M424.0 650.0 L660.7 505.0" stroke="#b9b4a5" stroke-width="4.8" transform="translate(-0.7 -1.7)"/>
<path d="M388.0 557.0 L365.0 604.0" stroke="#a09e93" stroke-width="12.0"/><path d="M388.0 557.0 L365.0 604.0" stroke="#afac9f" stroke-width="9.4" transform="translate(-0.3 -0.8)"/><path d="M388.0 557.0 L365.0 604.0" stroke="#b9b4a5" stroke-width="5.0" transform="translate(-0.7 -1.7)"/>
<path d="M388.0 557.0 L443.0 596.0" stroke="#a09e93" stroke-width="12.0"/><path d="M388.0 557.0 L443.0 596.0" stroke="#afac9f" stroke-width="9.4" transform="translate(-0.3 -0.8)"/><path d="M388.0 557.0 L443.0 596.0" stroke="#b9b4a5" stroke-width="5.0" transform="translate(-0.7 -1.7)"/>
<path d="M684.5 556.0 L660.7 505.0" stroke="#a09e93" stroke-width="11.0"/><path d="M684.5 556.0 L660.7 505.0" stroke="#afac9f" stroke-width="8.6" transform="translate(-0.3 -0.8)"/><path d="M684.5 556.0 L660.7 505.0" stroke="#b9b4a5" stroke-width="4.6" transform="translate(-0.7 -1.7)"/>
<path d="M443.0 596.0 L684.5 556.0" stroke="#a09e93" stroke-width="11.8"/><path d="M443.0 596.0 L684.5 556.0" stroke="#afac9f" stroke-width="9.2" transform="translate(-0.3 -0.8)"/><path d="M443.0 596.0 L684.5 556.0" stroke="#b9b4a5" stroke-width="5.0" transform="translate(-0.7 -1.7)"/>
<path d="M365.0 604.0 L418.0 647.0" stroke="#a09e93" stroke-width="13.0"/><path d="M365.0 604.0 L418.0 647.0" stroke="#afac9f" stroke-width="10.1" transform="translate(-0.3 -0.8)"/><path d="M365.0 604.0 L418.0 647.0" stroke="#b9b4a5" stroke-width="5.5" transform="translate(-0.7 -1.7)"/>
<path d="M418.0 647.0 L443.0 596.0" stroke="#a09e93" stroke-width="12.5"/><path d="M418.0 647.0 L443.0 596.0" stroke="#afac9f" stroke-width="9.8" transform="translate(-0.3 -0.8)"/><path d="M418.0 647.0 L443.0 596.0" stroke="#b9b4a5" stroke-width="5.2" transform="translate(-0.7 -1.7)"/>
<path d="M779.0 564.0 L754.0 684.0" stroke="#a09e93" stroke-width="11.0"/><path d="M779.0 564.0 L754.0 684.0" stroke="#afac9f" stroke-width="8.6" transform="translate(-0.3 -0.8)"/><path d="M779.0 564.0 L754.0 684.0" stroke="#b9b4a5" stroke-width="4.6" transform="translate(-0.7 -1.7)"/>
<path d="M971 355 L986.5 515 L986.5 598 Q985 628 958 636 L760 686 L742 689 Q721 688 714 668 Q694 600 684.5 556 L766 398.5" stroke="#a09e93" stroke-width="11.6"/><path d="M971 355 L986.5 515 L986.5 598 Q985 628 958 636 L760 686 L742 689 Q721 688 714 668 Q694 600 684.5 556 L766 398.5" stroke="#afac9f" stroke-width="9.0" transform="translate(-0.3 -0.8)"/><path d="M971 355 L986.5 515 L986.5 598 Q985 628 958 636 L760 686 L742 689 Q721 688 714 668 Q694 600 684.5 556 L766 398.5" stroke="#b9b4a5" stroke-width="4.9" transform="translate(-0.7 -1.7)"/>
<path d="M770.5 397.0 L779.0 564.0" stroke="#a09e93" stroke-width="12.0"/><path d="M770.5 397.0 L779.0 564.0" stroke="#afac9f" stroke-width="9.4" transform="translate(-0.3 -0.8)"/><path d="M770.5 397.0 L779.0 564.0" stroke="#b9b4a5" stroke-width="5.0" transform="translate(-0.7 -1.7)"/>
<path d="M684.5 556.0 L779.0 564.0" stroke="#a09e93" stroke-width="11.5"/><path d="M684.5 556.0 L779.0 564.0" stroke="#afac9f" stroke-width="9.0" transform="translate(-0.3 -0.8)"/><path d="M684.5 556.0 L779.0 564.0" stroke="#b9b4a5" stroke-width="4.8" transform="translate(-0.7 -1.7)"/>
<path d="M779.0 564.0 L986.5 515.0" stroke="#a09e93" stroke-width="11.0"/><path d="M779.0 564.0 L986.5 515.0" stroke="#afac9f" stroke-width="8.6" transform="translate(-0.3 -0.8)"/><path d="M779.0 564.0 L986.5 515.0" stroke="#b9b4a5" stroke-width="4.6" transform="translate(-0.7 -1.7)"/>
<path d="M986.5 515.0 L1148.0 467.0" stroke="#a09e93" stroke-width="10.5"/><path d="M986.5 515.0 L1148.0 467.0" stroke="#afac9f" stroke-width="8.2" transform="translate(-0.3 -0.8)"/><path d="M986.5 515.0 L1148.0 467.0" stroke="#b9b4a5" stroke-width="4.4" transform="translate(-0.7 -1.7)"/>
<path d="M684.5 556 L766.5 397.5 Q770 387.5 780 383.4 L970 351.5 L1105 477" stroke="#a09e93" stroke-width="11.4"/><path d="M684.5 556 L766.5 397.5 Q770 387.5 780 383.4 L970 351.5 L1105 477" stroke="#afac9f" stroke-width="8.9" transform="translate(-0.3 -0.8)"/><path d="M684.5 556 L766.5 397.5 Q770 387.5 780 383.4 L970 351.5 L1105 477" stroke="#b9b4a5" stroke-width="4.8" transform="translate(-0.7 -1.7)"/>
</svg>
<div id="timeline" class="abs"></div>
<div class="abs" style="left:0;top:892px;width:128.6px;height:1.2px;background:#c9c9c9"></div>
<div class="abs" style="left:610px;top:861.5px;width:226.2px;height:23px;background:#f0f0f0"></div>
<svg class="abs" style="left:0;top:855px" width="1445" height="83" viewBox="0 855 1445 83">

<defs>
 <g id="tE">
  <path d="M-8.1 4.7 H1.3 L4 1.9 V4.5 L1.3 7.4 H-8.1Z" fill="#b8b8b8"/>
  <rect x="-8.1" y="4.7" width="9.4" height=".9" fill="#e4e4e4"/>
  <rect x="-8.1" y="-4.7" width="9.4" height="9.4" fill="#4eb3ea"/>
  <path d="M-8.1 -4.7 L-5 -8.1 H4 L1.3 -4.7Z" fill="#78cdfb"/>
  <path d="M1.3 -4.7 L4 -8.1 V1.9 L1.3 4.7Z" fill="#2696d6"/>
  <path d="M5.6 -6 V4.2" stroke="#333" stroke-width=".9"/><path d="M5.6 -7.4 L6.9 -4.8 H4.3Z" fill="#333"/>
 </g>
 <g id="tM" fill="#2a2a2a">
  <path d="M0 -7.4 L2.5 -3.7 H.75 V-.75 H3.7 V-2.5 L7.3 0 L3.7 2.5 V.75 H.75 V3.7 H2.5 L0 7.4 L-2.5 3.7 H-.75 V.75 H-3.7 V2.5 L-7.3 0 L-3.7 -2.5 V-.75 H-.75 V-3.7 H-2.5Z"/>
 </g>
 <g id="tC">
  <rect x="-2.6" y="-5.6" width="8.4" height="7.8" fill="#4eb3ea"/>
  <path d="M-2.6 -5.6 L-.6 -8.1 H8 L5.8 -5.6Z" fill="#78cdfb"/>
  <path d="M5.8 -5.6 L8 -8.1 V0 L5.8 2.2Z" fill="#2696d6"/>
  <rect x="-8" y="-2.4" width="9.6" height="10" fill="#4eb3ea"/>
  <path d="M-8 -2.4 L-6 -4.6 H-2.6 V-2.4Z" fill="#78cdfb"/>
  <path d="M1.6 2.2 H3.8 V5.2 L1.6 7.6Z" fill="#2696d6"/>
 </g>
 <g id="tW">
  <rect x="-1.8" y="-5.4" width="7.6" height="7.6" fill="#4eb3ea"/>
  <path d="M-1.8 -5.4 L.4 -8.1 H8.2 L5.8 -5.4Z" fill="#78cdfb"/>
  <path d="M5.8 -5.4 L8.2 -8.1 V-.4 L5.8 2.2Z" fill="#2696d6"/>
  <rect x="-7.6" y="-4.6" width="12.4" height="12.2" fill="#f4f4f4" stroke="#8a8a8a" stroke-width=".9"/>
  <path d="M-4.6 -2.6 H3.2 L4.6 -4 M3.2 -2.6 V4.6" fill="none" stroke="#4eb3ea" stroke-width="1.2"/>
  <rect x="-4.6" y="-2.2" width="7.2" height="7.2" fill="#fff" stroke="#c4c4c4" stroke-width=".8"/>
 </g>
 <g id="tX">
  <path d="M-6.6 -6.6 L-2 -2 M-2 -6.6 L-6.6 -2" stroke="#e8343b" stroke-width="1.9"/>
  <path d="M-2.2 -.3 L.5 -3.3 H7.6 L5 -.3Z" fill="#fafafa" stroke="#9a9a9a" stroke-width=".7"/>
  <path d="M5 -.3 L7.6 -3.3 V3.4 L5 6.3Z" fill="#cfcfcf" stroke="#9a9a9a" stroke-width=".7"/>
  <rect x="-2.2" y="-.3" width="7.2" height="6.6" fill="#a6d8f6" stroke="#3a86cf" stroke-width=".9"/>
  <path d="M.2 -.3 V6.3 M2.6 -.3 V6.3 M-2.2 1.9 H5 M-2.2 4.1 H5" stroke="#7fc2ee" stroke-width=".5"/>
 </g>
 <g id="tH">
  <path d="M-8 .2 L-.8 -7 H3.8 L7.8 -2.8 V7.4 H-4 L-8 3.4Z" fill="#dadada" stroke="#b4b4b4" stroke-width=".8"/>
  <path d="M-8 .4 L-4.4 3.6 L-4 7.4 L-8 3.4Z" fill="#f7f7f7"/>
  <path d="M-7.4 .2 L-1.2 -6.2 L2.4 -3 L-4.2 3.4Z" fill="#3fa9e8"/>
 </g>
 <g id="tS">
  <circle cx="0" cy="0" r="7.6" fill="#6fc7fb"/>
  <path d="M-7.2 2.4 Q0 4.6 7.2 2.4 A7.6 7.6 0 0 1 -7.2 2.4Z" fill="#4eb3ea"/>
 </g>
 <g id="tA">
  <path d="M-4 -1 H.6 V1.2 H-4Z" fill="#111"/><path d="M-7.8 .1 L-3.9 -3.1 L-3.2 -1.6 V1.8 L-3.9 3.3Z" fill="#111"/>
  <circle cx="2.9" cy=".1" r="3.7" fill="#8fb5e6" stroke="#5d86c4" stroke-width=".8"/>
 </g>
 <g id="tT">
  <path d="M-7.4 7.4 V-2 L-3.8 -5.7 H1 L5.6 -.6 V3.4 L2 7.4Z" fill="#dcdcdc" stroke="#7d7d7d" stroke-width=".9" stroke-linejoin="round"/>
  <path d="M2 7.4 L2 1.4 L5.6 -.6" fill="none" stroke="#b0b0b0" stroke-width=".7"/>
  <path d="M0 -4.3 L.75 -1.8 L3.05 -3.05 L1.8 -.75 L4.3 0 L1.8 .75 L3.05 3.05 L.75 1.8 L0 4.3 L-.75 1.8 L-3.05 3.05 L-1.8 .75 L-4.3 0 L-1.8 -.75 L-3.05 -3.05 L-.75 -1.8Z" transform="translate(3.4 -3.4)" fill="#fba31c"/>
 </g>
 <g id="tG">
  <path d="M-7.4 7.4 V-3 L-2.8 -7.7 H3 L7.4 -3 V3.4 L3.4 7.4Z" fill="#c9ced7" stroke="#777" stroke-width=".9" stroke-linejoin="round"/>
  <path d="M-6.9 -1.6 Q-6.4 -1.7 -2 -1.7 Q2.6 -1.2 3.2 3 V6.9 H-6.9Z" fill="#d9dce2"/>
  <path d="M3.2 3 L6.9 -.6 V3.2 L3.2 6.9Z" fill="#9aa5b8"/>
  <path d="M-2.4 -7.2 H2.8 L6.9 -2.8 V-.6 L3.2 3 Q2.6 -1.2 -2 -1.7 L-6.9 -1.7 V-2.8Z" fill="#bcc3cf"/>
 </g>
</defs>

<g>
 <path id="nd" d="M0 0 H5.6 L2.8 4.2Z" fill="#1e1e1e" transform="translate(632.7 870.8)"/>
 <ellipse cx="620.5" cy="872.4" rx="7.3" ry="3.6" fill="#fff" stroke="#666" stroke-width="1" transform="rotate(-8 620.5 872.4)"/>
 <ellipse cx="620.5" cy="872.4" rx="3.7" ry="7.2" fill="none" stroke="#666" stroke-width="1" transform="rotate(-14 620.5 872.4)"/>
 <circle cx="620.6" cy="872.6" r="1.1" fill="#2f8fe6"/>
 <path d="M621.8 867.4 L623.8 868.8 L622.2 869.6Z M623.8 869.6 L625.6 871.4 L623.6 871.8Z" fill="#222"/>
 <!-- look at -->
 <path d="M647.6 870 L649.6 866.6 L653.6 868.2 L655.2 866.4 L655.8 870Z" fill="#9aa2b0" stroke="#666" stroke-width=".8"/>
 <rect x="645.3" y="870" width="13.3" height="9.6" rx="1" fill="#c3c9d5" stroke="#666" stroke-width="1"/>
 <rect x="647.4" y="872.2" width="9.2" height="5.2" fill="#a9b2c3" stroke="#7d8596" stroke-width=".7"/>
 <path d="M647.4 874.8 H656.6" stroke="#7d8596" stroke-width=".6"/>
 <!-- pan hand -->
 <path d="M673.6 880 Q671.2 876.6 669.8 873.6 Q669.6 872.4 670.8 872.4 Q672 872.6 673.4 875 L673.4 867.4 Q673.4 866.2 674.4 866.2 Q675.4 866.2 675.4 867.4 L675.6 871.6 L675.6 866 Q675.6 865 676.6 865 Q677.6 865 677.6 866 L677.8 871.6 L678 866.6 Q678 865.6 679 865.6 Q680 865.6 680 866.6 L680 872 L680.6 868.6 Q680.8 867.6 681.8 867.8 Q682.6 868 682.6 869 L682.2 875 Q682 878 680.6 880Z" fill="#fff" stroke="#666" stroke-width=".9" stroke-linejoin="round"/>
 <!-- zoom -->
 <path d="M703 874.2 L708 878.6" stroke="#333" stroke-width="2.2" stroke-linecap="round"/>
 <circle cx="699.4" cy="870.6" r="4.9" fill="#e4f0f0" stroke="#777" stroke-width="1.1"/>
 <path d="M706.4 866.4 H708.6 M707.5 865.3 V867.5 M706.4 869.6 H708.6" stroke="#777" stroke-width=".8"/>
 <!-- zoom window -->
 <rect x="719.4" y="866" width="14" height="14" fill="none" stroke="#b4b4b4" stroke-width=".9" stroke-dasharray="2 1.6"/>
 <path d="M728 874.4 L732.4 879" stroke="#333" stroke-width="2.2" stroke-linecap="round"/>
 <circle cx="724.4" cy="870.6" r="5" fill="#e4f0f0" stroke="#777" stroke-width="1.1"/>
 <use href="#nd" x="106.1" y="0"/>
 <!-- display -->
 <rect x="750.8" y="865.6" width="14.2" height="11.8" rx="1" fill="#a9a9a9" stroke="#7a7a7a" stroke-width=".8"/>
 <rect x="752.6" y="867.2" width="10.6" height="8.4" fill="#7fabdf"/>
 <path d="M755.6 877.4 H760.4 L761 879 H755Z" fill="#9bb3d3"/><rect x="753.6" y="879" width="8.6" height="1" fill="#8a8a8a"/>
 <use href="#nd" x="135" y="0"/>
 <!-- grid -->
 <defs><linearGradient id="grg" x1="0" y1="0" x2="0" y2="1"><stop offset="0" stop-color="#858585"/><stop offset="1" stop-color="#a9b6cc"/></linearGradient></defs>
 <rect x="780.4" y="865.6" width="13.6" height="14.2" fill="url(#grg)" stroke="#7a7a7a" stroke-width=".7"/>
 <path d="M782.6 865.6 v14.2 M784.8 865.6 v14.2 M787 865.6 v14.2 M789.2 865.6 v14.2 M791.4 865.6 v14.2 M780.4 868 h13.6 M780.4 870.4 h13.6 M780.4 872.8 h13.6 M780.4 875.2 h13.6 M780.4 877.6 h13.6" stroke="#e6e9ee" stroke-width=".55"/>
 <use href="#nd" x="164.7" y="0"/>
 <!-- viewports -->
 <rect x="810" y="866.8" width="14" height="12" fill="#7fabdf" stroke="#4f7fbd" stroke-width=".9"/>
 <path d="M817 866.8 V878.8 M810 872.8 H824" stroke="#4f7fbd" stroke-width="1"/>
 <use href="#nd" x="194.2" y="0"/>
</g>
<path d="M1425.3 869.3 A7.6 7.6 0 0 1 1432.9 876.9 V884.5 H1425.3 A7.6 7.6 0 0 1 1425.3 869.3Z" fill="#050505"/>
<path d="M1421 877.6 L1428.6 873.8 M1421.6 878.8 L1427 876 M1428.8 873.4 L1429.4 877.4 M1426.6 877.6 L1429.6 876.6" fill="none" stroke="#dcdcdc" stroke-width=".9"/>
<rect x="1419" y="893.2" width="20" height="6.4" rx="3.2" fill="#d2d2d2"/>
<g fill="#666">
 <rect x="10.6" y="913.1" width="1.6" height="11.2"/><path d="M13.3 918.9 L21.1 913.5 V924.3Z"/>
 <path d="M33.7 918.9 L43 913.5 V924.3Z"/><rect x="44.3" y="916.9" width="1.6" height="4.7"/>
 <path d="M58 911.3 L69.8 918.5 L58 925.7Z"/>
 <rect x="81.2" y="916.9" width="1.6" height="4.7"/><path d="M84.1 913.5 L93.4 918.9 L84.1 924.3Z"/>
 <path d="M106 913.5 L113.8 918.9 L106 924.3Z"/><rect x="115.2" y="913.1" width="1.6" height="11.2"/>
</g>
<path d="M131.3 931.3 H134 M135.8 931.3 H139.4 M141.7 931.3 H1386.3" stroke="#c6c6c6" stroke-width="1.3"/>
<path d="M148.0 926.2 V931.3 M170.9 926.2 V931.3 M193.8 926.2 V931.3 M216.8 926.2 V931.3 M239.7 926.2 V931.3 M262.6 926.2 V931.3 M285.5 926.2 V931.3 M308.4 926.2 V931.3 M331.4 926.2 V931.3 M354.3 926.2 V931.3 M377.2 926.2 V931.3 M400.1 926.2 V931.3 M423.0 926.2 V931.3 M446.0 926.2 V931.3 M468.9 926.2 V931.3 M491.8 926.2 V931.3 M514.7 926.2 V931.3 M537.6 926.2 V931.3 M560.6 926.2 V931.3 M583.5 926.2 V931.3 M606.4 926.2 V931.3 M629.3 926.2 V931.3 M652.2 926.2 V931.3 M675.2 926.2 V931.3 M698.1 926.2 V931.3 M721.0 926.2 V931.3 M743.9 926.2 V931.3 M766.8 926.2 V931.3 M789.8 926.2 V931.3 M812.7 926.2 V931.3 M835.6 926.2 V931.3 M858.5 926.2 V931.3 M881.4 926.2 V931.3 M904.4 926.2 V931.3 M927.3 926.2 V931.3 M950.2 926.2 V931.3 M973.1 926.2 V931.3 M996.0 926.2 V931.3 M1019.0 926.2 V931.3 M1041.9 926.2 V931.3 M1064.8 926.2 V931.3 M1087.7 926.2 V931.3 M1110.6 926.2 V931.3 M1133.6 926.2 V931.3 M1156.5 926.2 V931.3 M1179.4 926.2 V931.3 M1202.3 926.2 V931.3 M1225.2 926.2 V931.3 M1248.2 926.2 V931.3 M1271.1 926.2 V931.3 M1294.0 926.2 V931.3 M1316.9 926.2 V931.3 M1339.8 926.2 V931.3 M1362.8 926.2 V931.3 M1385.7 926.2 V931.3" stroke="#c8c8c8" stroke-width="1.3"/>
<use href="#tE" x="147.0" y="915.1"/>
<use href="#tM" x="170.9" y="915.1"/>
<use href="#tC" x="193.8" y="915.1"/>
<use href="#tW" x="217.4" y="915.1"/>
<use href="#tX" x="239.7" y="915.1"/>
<use href="#tX" x="262.6" y="915.1"/>
<use href="#tW" x="286.1" y="915.1"/>
<use href="#tW" x="309.0" y="915.1"/>
<use href="#tW" x="332.0" y="915.1"/>
<use href="#tE" x="353.3" y="915.1"/>
<use href="#tX" x="377.2" y="915.1"/>
<use href="#tE" x="399.1" y="915.1"/>
<use href="#tX" x="423.0" y="915.1"/>
<use href="#tM" x="446.0" y="915.1"/>
<use href="#tM" x="468.9" y="915.1"/>
<use href="#tM" x="491.8" y="915.1"/>
<use href="#tE" x="513.7" y="915.1"/>
<use href="#tE" x="536.6" y="915.1"/>
<use href="#tM" x="560.6" y="915.1"/>
<use href="#tM" x="583.5" y="915.1"/>
<use href="#tM" x="606.4" y="915.1"/>
<use href="#tM" x="629.3" y="915.1"/>
<use href="#tM" x="652.2" y="915.1"/>
<use href="#tM" x="675.2" y="915.1"/>
<use href="#tH" x="698.1" y="915.1"/>
<use href="#tH" x="721.0" y="915.1"/>
<use href="#tX" x="743.9" y="915.1"/>
<use href="#tX" x="766.8" y="915.1"/>
<use href="#tX" x="789.8" y="915.1"/>
<use href="#tX" x="812.7" y="915.1"/>
<use href="#tS" x="835.6" y="915.1"/>
<use href="#tM" x="858.5" y="915.1"/>
<use href="#tW" x="882.0" y="915.1"/>
<use href="#tM" x="904.4" y="915.1"/>
<use href="#tC" x="927.3" y="915.1"/>
<use href="#tM" x="950.2" y="915.1"/>
<use href="#tH" x="973.1" y="915.1"/>
<use href="#tA" x="996.0" y="915.1"/>
<use href="#tA" x="1019.0" y="915.1"/>
<use href="#tT" x="1041.9" y="915.1"/>
<use href="#tG" x="1064.8" y="915.1"/>
<use href="#tT" x="1087.7" y="915.1"/>
<use href="#tG" x="1110.6" y="915.1"/>
<use href="#tT" x="1133.6" y="915.1"/>
<use href="#tG" x="1156.5" y="915.1"/>
<use href="#tT" x="1179.4" y="915.1"/>
<use href="#tG" x="1202.3" y="915.1"/>
<use href="#tT" x="1225.2" y="915.1"/>
<use href="#tG" x="1248.2" y="915.1"/>
<use href="#tT" x="1271.1" y="915.1"/>
<use href="#tG" x="1294.0" y="915.1"/>
<use href="#tT" x="1316.9" y="915.1"/>
<use href="#tG" x="1339.8" y="915.1"/>
<use href="#tT" x="1362.8" y="915.1"/>
<use href="#tG" x="1385.7" y="915.1"/>
<path d="M1397.2 904 V931.6" stroke="#555" stroke-width="1.5"/>
<path d="M1391.6000000000001 902.2 H1402.6000000000001 V906.4 L1398.0 910.2 H1396.4 L1391.6000000000001 906.4Z" fill="#666"/>
<circle cx="1424.4" cy="918.6" r="5.1" fill="#7a7a7a"/>
<path d="M1429.23 917.31 L1431.54 917.08 L1431.54 920.12 L1429.23 919.89 L1428.73 921.11 L1430.52 922.57 L1428.37 924.72 L1426.91 922.93 L1425.69 923.43 L1425.92 925.74 L1422.88 925.74 L1423.11 923.43 L1421.89 922.93 L1420.43 924.72 L1418.28 922.57 L1420.07 921.11 L1419.57 919.89 L1417.26 920.12 L1417.26 917.08 L1419.57 917.31 L1420.07 916.09 L1418.28 914.63 L1420.43 912.48 L1421.89 914.27 L1423.11 913.77 L1422.88 911.46 L1425.92 911.46 L1425.69 913.77 L1426.91 914.27 L1428.37 912.48 L1430.52 914.63 L1428.73 916.09Z" fill="#7a7a7a"/>
<circle cx="1424.4" cy="918.6" r="2" fill="#f1f1f1"/>
</svg>
</body>
</html>
